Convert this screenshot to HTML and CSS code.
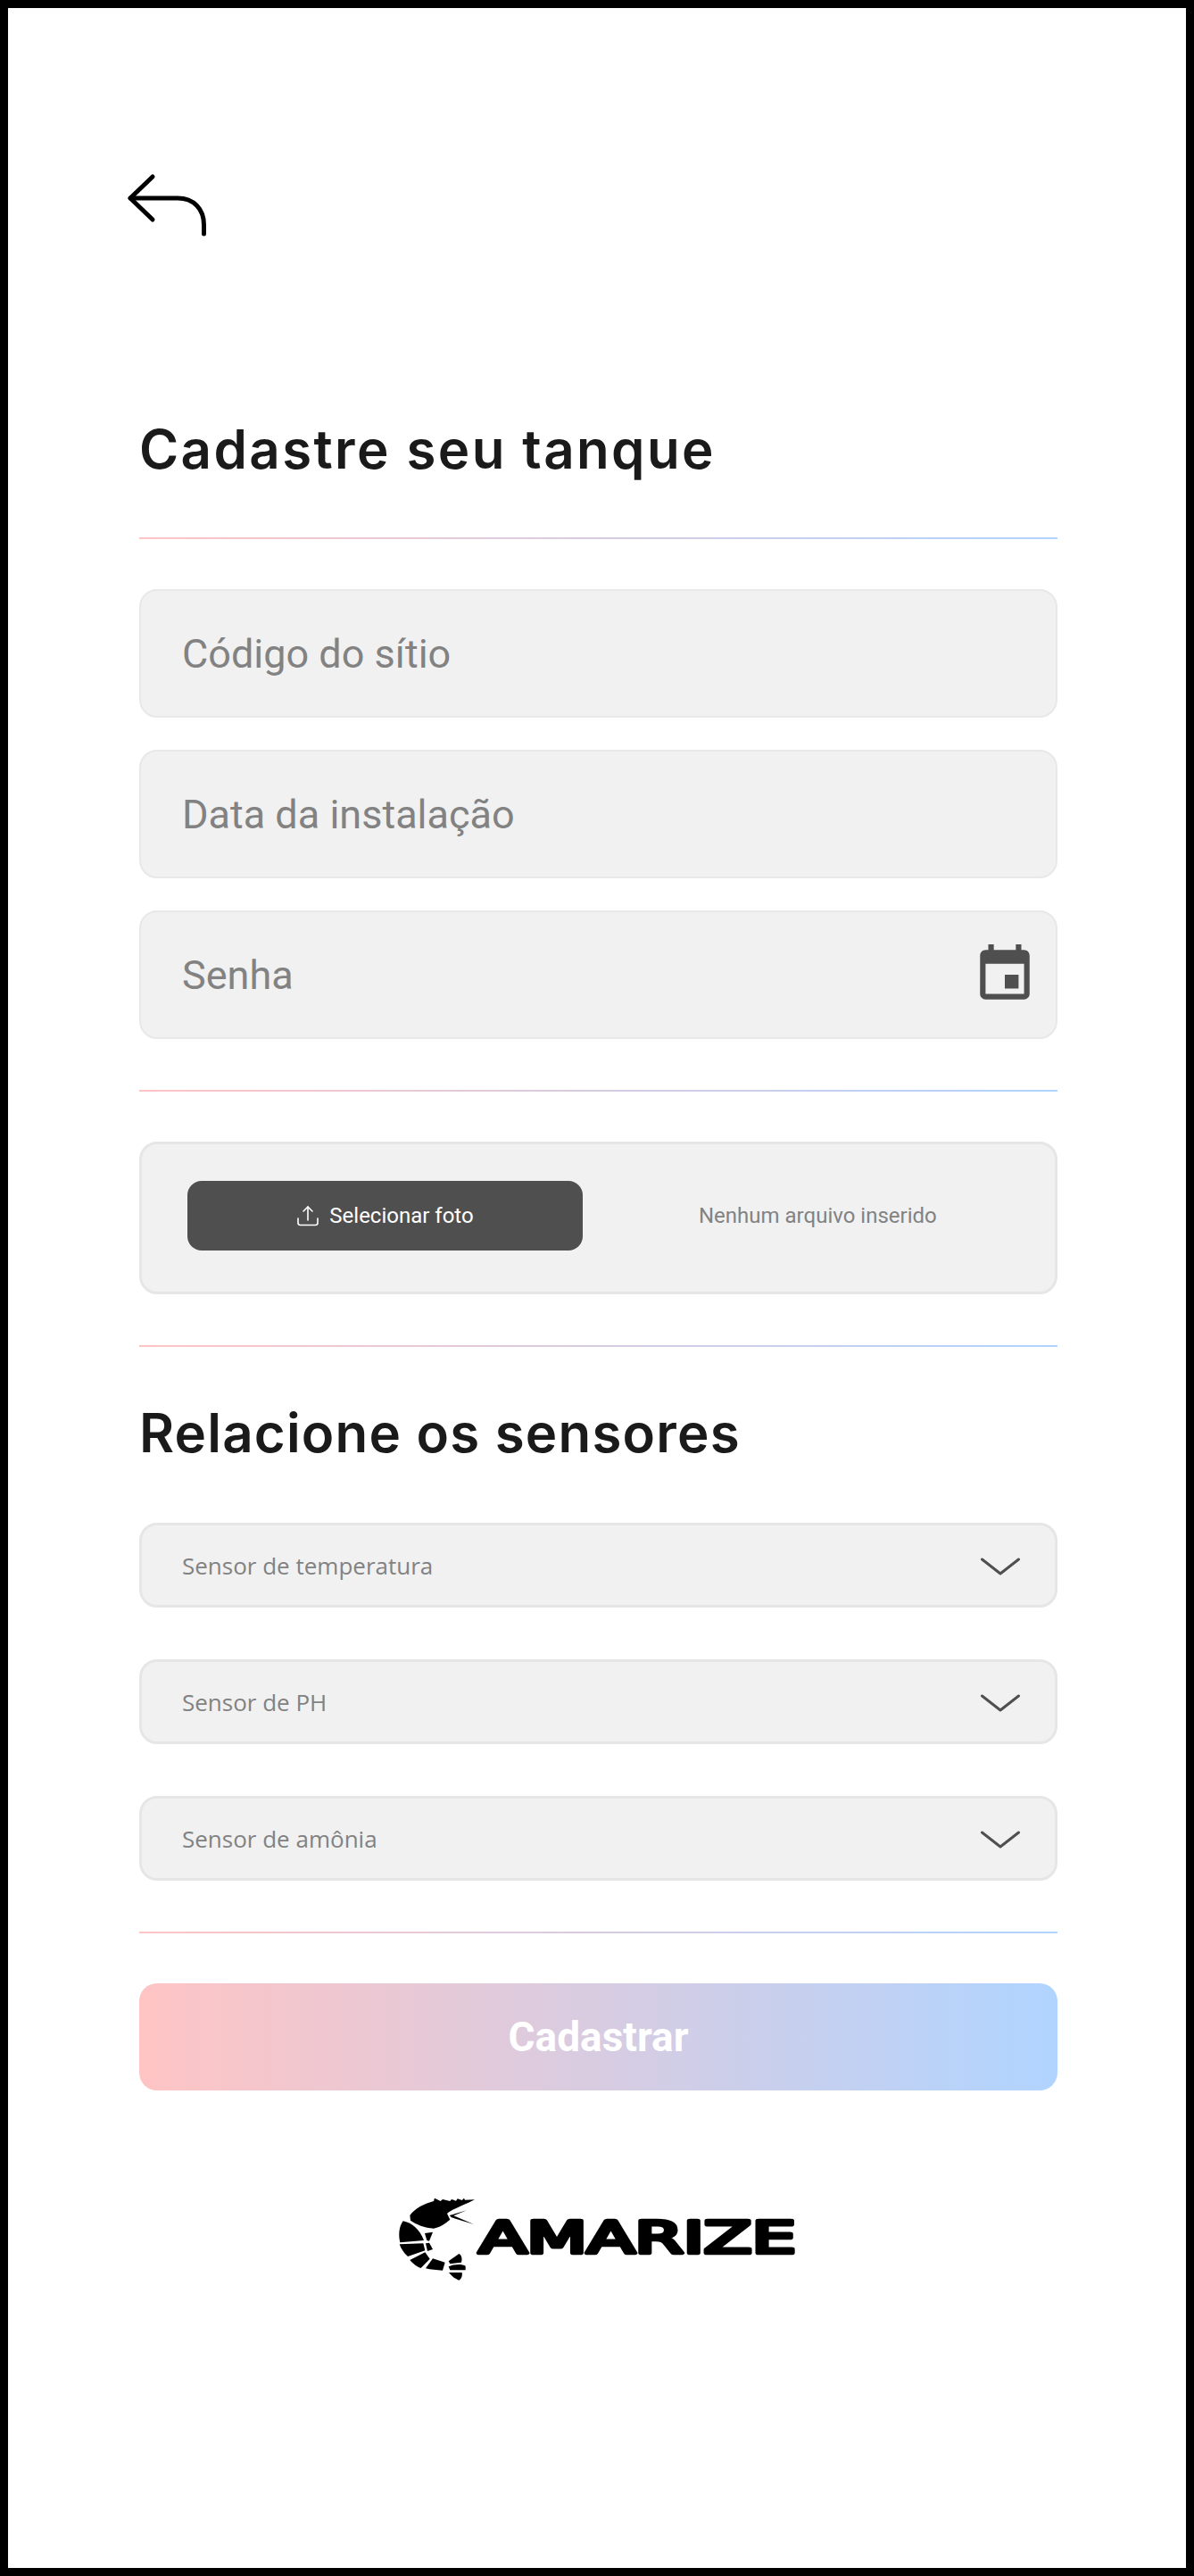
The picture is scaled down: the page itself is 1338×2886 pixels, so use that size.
FILE: index.html
```html
<!DOCTYPE html>
<html lang="pt-BR">

<head>
    <meta charset="UTF-8">
    <meta name="viewport" content="width=device-width, initial-scale=1.0">
    <title>Cadastre seu tanque</title>
    <link rel="stylesheet" href="styles.css">
</head>

<body>
    <div class="page">
        <a class="back" href="#">
            <svg width="92" height="72" viewBox="0 0 92 72" fill="none" stroke="#000" stroke-width="5" stroke-linecap="round" stroke-linejoin="round">
                <path d="M29 4 L4 28 L29 52" />
                <path d="M4 28 H57 C75 28 86.500 40 86.500 58 V68" />
            </svg>
        </a>

        <h1 class="title">Cadastre seu tanque</h1>
        <div class="line"></div>

        <div class="fields">
            <div class="field">Código do sítio</div>
            <div class="field">Data da instalação</div>
            <div class="field">
                <span>Senha</span>
                <svg class="calendar" width="74" height="74" viewBox="0 0 24 24" fill="#4f4f4f">
                    <path d="M17 12h-5v5h5v-5zM16 1v2H8V1H6v2H5c-1.11 0-1.99.9-1.99 2L3 19c0 1.1.89 2 2 2h14c1.1 0 2-.9 2-2V5c0-1.1-.9-2-2-2h-1V1h-2zm3 18H5V8h14v11z" />
                </svg>
            </div>
        </div>
        <div class="line line-mid"></div>

        <div class="upload">
            <button class="upload-btn">
                <svg width="26" height="24" viewBox="0 0 26 24" fill="none" stroke="#fff" stroke-width="1.6" stroke-linecap="round" stroke-linejoin="round">
                    <path d="M13 2 V17" />
                    <path d="M8 7 L13 2 L18 7" />
                    <path d="M2 15 V20 C2 21.500 3 22.500 4.500 22.500 H21.500 C23 22.500 24 21.500 24 20 V15" />
                </svg>
                Selecionar foto
            </button>
            <span class="upload-text">Nenhum arquivo inserido</span>
        </div>
        <div class="line line-mid"></div>

        <h2 class="title title-sensors">Relacione os sensores</h2>

        <div class="selects">
            <div class="select">
                <span>Sensor de temperatura</span>
                <svg class="chevron" width="44" height="20" viewBox="0 0 44 20" fill="none" stroke="#4f4f4f" stroke-width="3" stroke-linecap="round" stroke-linejoin="round">
                    <path d="M1.500 2 L22 18 L42.500 2" />
                </svg>
            </div>
            <div class="select">
                <span>Sensor de PH</span>
                <svg class="chevron" width="44" height="20" viewBox="0 0 44 20" fill="none" stroke="#4f4f4f" stroke-width="3" stroke-linecap="round" stroke-linejoin="round">
                    <path d="M1.500 2 L22 18 L42.500 2" />
                </svg>
            </div>
            <div class="select">
                <span>Sensor de amônia</span>
                <svg class="chevron" width="44" height="20" viewBox="0 0 44 20" fill="none" stroke="#4f4f4f" stroke-width="3" stroke-linecap="round" stroke-linejoin="round">
                    <path d="M1.500 2 L22 18 L42.500 2" />
                </svg>
            </div>
        </div>
        <div class="line line-mid"></div>

        <button class="submit">Cadastrar</button>

        <svg class="logo" width="500" height="130" viewBox="0 0 1500 390">
            <!-- camarao -->
            <path d="M333 85 L300 86 L297 80 L290 87 L275 82 L270 89 L255 84 L250 90 L225 84 L218 90 L198 80 L195 90 C165 98 130 115 115 138 L117 155 C135 168 165 180 195 182 C215 178 235 165 250 152 L240 132 C255 118 295 105 333 85Z" />
            <path d="M248 138 L306 121 L262 139 L330 168 L255 145Z" />
            <path d="M92 157 C120 162 148 185 162 222 L82 229 C76 205 78 175 92 157Z" />
            <path d="M80 235 L160 232 L166 256 L108 276 C95 265 85 250 80 235Z" />
            <path d="M115 288 L166 262 L182 284 L152 315 C140 312 125 300 115 288Z" />
            <path d="M192 283 L233 296 L225 323 C205 322 185 320 168 316Z" />
            <path d="M165 198 L192 194 L180 224 L172 222Z" />
            <path d="M168 232 L180 230 L192 252 L174 258Z" />
            <path d="M245 292 L280 267 C290 272 291 285 288 296 L250 301Z" />
            <path d="M245 310 C262 302 290 300 302 308 L302 322 L250 322Z" />
            <path d="M246 330 L290 330 C292 342 288 352 280 356 C268 352 255 342 246 330Z" />
            <text class="logo-text" x="347" y="263" textLength="1066" lengthAdjust="spacingAndGlyphs">AMARIZE</text>
        </svg>
    </div>
</body>

</html>
```

FILE: styles.css
```css
* {
    box-sizing: border-box;
}

html,
body {
    margin: 0;
    padding: 0;
    background: #fff;
}

.page {
    height: 2886px;
    border: 9px solid #000;
    padding: 185px 144px 0 147px;
    font-family: "Roboto", sans-serif;
    overflow: hidden;
}

.back {
    display: block;
    width: 92px;
    height: 72px;
    margin-left: -14px;
}

.back svg {
    display: block;
}

.title {
    margin: 197px 0 59px;
    height: 80px;
    line-height: 80px;
    font-family: "Inter", sans-serif;
    font-size: 60px;
    font-weight: 600;
    letter-spacing: 2.4px;
    color: #1a1a1a;
}

.title-sensors {
    margin: 56px 0 61px;
    letter-spacing: 1.2px;
}

.line {
    height: 2px;
    margin-bottom: 1px;
    background: linear-gradient(90deg, #ffc4c4, #b0d4ff);
}

.line-mid {
    margin-top: 57px;
}

.fields {
    display: flex;
    flex-direction: column;
    gap: 36px;
    margin-top: 56px;
}

.field {
    display: flex;
    align-items: center;
    justify-content: space-between;
    height: 144px;
    padding: 0 20px 0 46px;
    background: #f1f1f1;
    border: 2px solid #e8e8e8;
    border-radius: 20px;
    font-size: 45px;
    color: #828282;
}

.upload {
    display: flex;
    align-items: center;
    height: 171px;
    margin-top: 56px;
    padding: 0 0 6px 51px;
    background: #f1f1f1;
    border: 3px solid #e6e6e6;
    border-radius: 20px;
}

.upload-btn {
    display: flex;
    align-items: center;
    justify-content: center;
    gap: 11px;
    width: 443px;
    height: 78px;
    border: 0;
    border-radius: 16px;
    background: #4f4f4f;
    color: #fff;
    font-family: "Roboto", sans-serif;
    font-size: 24px;
}

.upload-text {
    margin-left: 130px;
    font-size: 24px;
    color: #828282;
}

.selects {
    display: flex;
    flex-direction: column;
    gap: 58px;
}

.select {
    display: flex;
    align-items: center;
    justify-content: space-between;
    height: 95px;
    padding: 0 39px 0 45px;
    background: #f1f1f1;
    border: 3px solid #e6e6e6;
    border-radius: 20px;
    font-family: "Open Sans", sans-serif;
    font-size: 26px;
    color: #828282;
}

.chevron {
    margin-top: 2px;
}

.submit {
    display: block;
    width: 100%;
    height: 120px;
    margin-top: 56px;
    border: 0;
    border-radius: 20px;
    background: linear-gradient(90deg, #ffc4c4, #b0d4ff);
    color: #fff;
    font-family: "Roboto", sans-serif;
    font-size: 46px;
    font-weight: 700;
}

.logo {
    display: block;
    margin: 94px auto 0;
}

.logo-text {
    font-family: "DejaVu Sans", sans-serif;
    font-size: 148px;
    stroke: #000;
    stroke-width: 14px;
    stroke-linejoin: round;
}
```
